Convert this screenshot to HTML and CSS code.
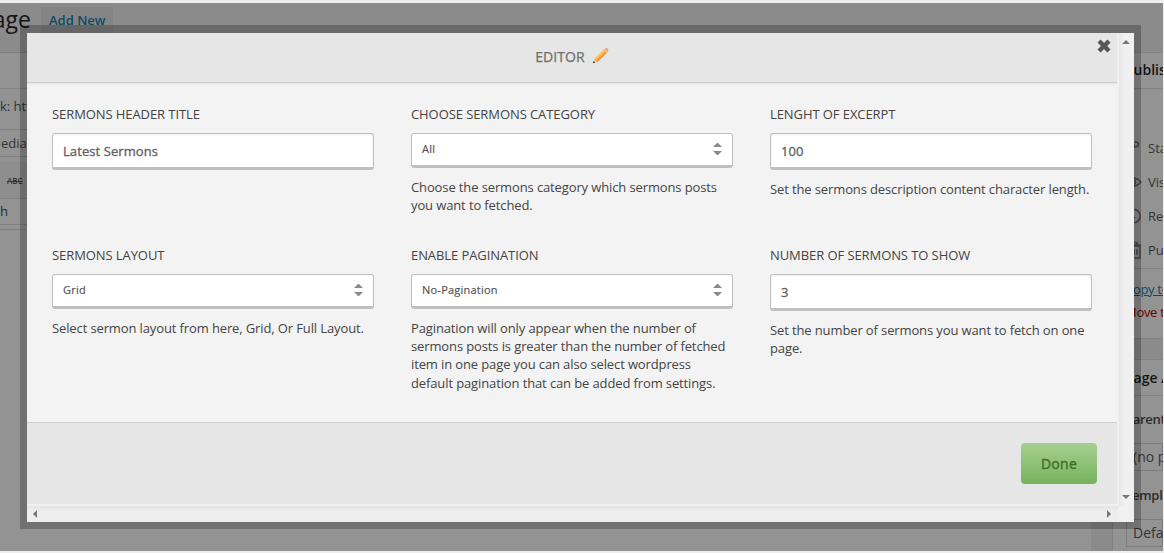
FILE: index.html
```
<!DOCTYPE html>
<html lang="en">
<head>
<meta charset="utf-8">
<title>Editor</title>
<link rel="stylesheet" href="styles.css">
</head>
<body>
<div class="page">
  <main class="editor-col">
    <div class="page-title"><h1><span>age</span></h1><a class="add-new">Add New</a></div>
    <div class="row title-row"></div>
    <div class="row link-row">k: http://</div>
    <div class="row media-row">edia</div>
    <div class="row gap-row"></div>
    <div class="row tools-row"><s>ABC</s></div>
    <div class="row para-row">h</div>
    <div class="row end-row"></div>
  </main>
  <aside class="side">
    <section class="box publish">
      <h2>Publish</h2>
      <ul>
        <li><svg width="18" height="18" viewBox="0 0 18 18"><path d="M7 14V4M8 3h4q4 1 2 4l-3 1z"/></svg>Status</li>
        <li><svg width="18" height="18" viewBox="0 0 18 18"><path d="M2 9q7.500-8 15 0q-7.500 8-15 0z"/><circle cx="9" cy="9" r="2.500"/></svg>Visibility</li>
        <li><svg width="18" height="18" viewBox="0 0 18 18"><circle cx="9.500" cy="9" r="6.800"/><path d="M8 5v4l3 2"/></svg>Revisions</li>
        <li><svg width="18" height="18" viewBox="0 0 18 18"><path d="M4 5h12v12H4zM3 4h14M7 1.500h6V4M10 8v6M13 8v6"/></svg>Published</li>
      </ul>
      <div class="actions"><a class="copy">Copy to a new draft</a><a class="trash">Move to Trash</a></div>
    </section>
    <section class="box attrs">
      <h2>Page Attributes</h2>
      <h3>Parent</h3>
      <div class="drop">(no parent)</div>
      <h3 class="tpl">Template</h3>
      <div class="drop">Default</div>
    </section>
  </aside>
</div>

<div class="modal">
  <div class="modal-main">
    <header class="modal-head">
      <span>EDITOR</span>
      <svg class="pencil" width="18" height="18" viewBox="0 0 18 18">
        <path d="M1 16.2L2.2 12L5.3 15z" fill="#f3cfb0"/>
        <path d="M1 16.2l.6-2.2l1.700 1.600z" fill="#222"/>
        <path d="M2.2 12L11.5 3L14.6 6L5.3 15z" fill="#fbb04a"/>
        <path d="M2.2 12L11.5 3L12.5 4L3.2 13z" fill="#ffc95f"/>
        <path d="M4.3 14L13.6 5L14.6 6L5.3 15z" fill="#ee8a45"/>
        <path d="M11.5 3L12.6 1.9L15.7 4.9L14.6 6z" fill="#f9c07c"/>
        <path d="M12.6 1.9Q14 .3 15.7 1.6Q17.2 3.2 15.7 4.9z" fill="#f3a06a"/>
      </svg>
      <svg class="close" width="14" height="14" viewBox="0 0 14 14"><path d="M3.6 3.6L10.4 10.4M10.4 3.6L3.6 10.4" stroke="#585858" stroke-width="4.4" stroke-linecap="square"/></svg>
    </header>
    <div class="fields">
      <div class="field"><label>SERMONS HEADER TITLE</label><div class="input">Latest Sermons</div></div>
      <div class="field"><label>CHOOSE SERMONS CATEGORY</label>
        <div class="select"><span>All</span><i class="arrows"></i></div>
        <p>Choose the sermons category which sermons posts<br>you want to fetched.</p></div>
      <div class="field"><label>LENGHT OF EXCERPT</label><div class="input">100</div>
        <p>Set the sermons description content character length.</p></div>
      <div class="field"><label>SERMONS LAYOUT</label>
        <div class="select"><span>Grid</span><i class="arrows"></i></div>
        <p>Select sermon layout from here, Grid, Or Full Layout.</p></div>
      <div class="field"><label>ENABLE PAGINATION</label>
        <div class="select"><span>No-Pagination</span><i class="arrows"></i></div>
        <p>Pagination will only appear when the number of<br>sermons posts is greater than the number of fetched<br>item in one page you can also select wordpress<br>default pagination that can be added from settings.</p></div>
      <div class="field"><label>NUMBER OF SERMONS TO SHOW</label><div class="input">3</div>
        <p>Set the number of sermons you want to fetch on one<br>page.</p></div>
    </div>
    <footer class="modal-foot"><a class="done">Done</a></footer>
  </div>
  <div class="vbar"><i class="tri up"></i><i class="tri down"></i></div>
  <div class="hbar"><i class="tri left"></i><i class="tri right"></i></div>
  <div class="corner"></div>
</div>
</body>
</html>
```
FILE: styles.css
```
* { box-sizing: border-box; }
body {
  margin: 0;
  height: 553px;
  overflow: hidden;
  padding: 3px 1px 2px 0;
  background: #eee;
  font: 13px/18px "Open Sans", sans-serif;
  color: #444;
}
h1, h2, h3, p, ul { margin: 0; padding: 0; font-weight: 400; }
ul { list-style: none; }

/* dimmed page behind the dialog */
.page {
  display: flex;
  gap: 21px;
  height: 548px;
  overflow: hidden;
  background: #8b8b8b;
  color: #333;
  white-space: nowrap;
}
.editor-col { width: 1091px; flex: none; background: linear-gradient(#8b8b8b 49px, #939393 49px); }
.page-title { display: flex; height: 49px; gap: 10px; }
.page-title h1 {
  width: 31px;
  display: flex;
  justify-content: flex-end;
  font-size: 23px;
  line-height: 33px;
  color: #151515;
}
.add-new {
  margin-top: 4px;
  height: 27px;
  padding: 0 8px;
  border-radius: 2px;
  background: #848484;
  color: #0c4a66;
  font-weight: 600;
  line-height: 26px;
}
.row { border-top: 1px solid #808080; }
.title-row { height: 36px; }
.link-row { height: 41px; line-height: 34px; border-color: #848484; }
.media-row { height: 27px; line-height: 26px; padding-left: 1px; }
.gap-row { height: 6px; }
.tools-row { height: 36px; padding-left: 7px; font-size: 8px; font-weight: 600; line-height: 36px; border-color: #8a8a8a; background: #8e8e8e; }
.para-row { height: 26px; line-height: 24px; color: #0f3545; }
.end-row { height: 6px; border-bottom: 1px solid #808080; }
.side { width: 51px; flex: none; padding-top: 49px; }
.box { border: solid #818181; border-width: 1px 0 1px 1px; background: #939393; overflow: hidden; }
.box h2 { height: 36px; padding-left: 12px; line-height: 34px; font-weight: 600; font-size: 14px; color: #151515; border-bottom: 1px solid #818181; }
.publish { height: 287px; margin-bottom: 20px; }
.publish ul { padding-top: 42px; }
.publish li { display: flex; gap: 6px; height: 34px; padding-left: 11px; line-height: 34px; align-items: center; }
.publish li svg { flex: none; fill: none; stroke: #4d4d4d; stroke-width: 1.5; }
.actions { display: flex; flex-direction: column; gap: 5px; margin-top: 1px; border-top: 1px solid #818181; padding: 11px 0 0 12px; letter-spacing: -.3px; }
.copy { color: #0c4a66; text-decoration: underline; }
.trash { color: #6d0000; }
.attrs { height: 192px; border-bottom: 0; }
.attrs h2 { line-height: 36px; }
.attrs h3 { height: 47px; padding: 14px 0 0 12px; font-size: 13px; font-weight: 600; color: #2b2b2b; letter-spacing: -.3px; }
.attrs .tpl { height: 48px; padding-top: 15px; }
.drop { height: 28px; margin-left: 13px; padding-left: 6px; line-height: 25px; border: 1px solid #7c7c7c; font-size: 14px; }

/* dialog */
.modal {
  position: absolute;
  left: 20px;
  top: 25px;
  width: 1121px;
  height: 504px;
  border: solid rgba(0, 0, 0, .23);
  border-width: 8px 7px 7px;
  background: #f0f0f0;
  background-clip: padding-box;
  display: grid;
  grid-template: 473px 16px / 1092px 15px;
}
.modal-main { display: flex; flex-direction: column; width: 1090px; height: 471px; background: #f3f3f3; }
.modal-head {
  position: relative;
  display: flex;
  justify-content: center;
  gap: 7px;
  height: 50px;
  padding-left: 1px;
  border-bottom: 1px solid #cecece;
  background: #e6e6e6;
  color: #707070;
  font-size: 14px;
  line-height: 48px;
}
.modal-head span { -webkit-text-stroke: .25px #707070; letter-spacing: .1px; }
.pencil { margin-top: 14px; }
.close { position: absolute; right: 6px; top: 6px; }
.fields {
  flex: 1;
  display: grid;
  grid-template: 141px 1fr / 322px 322px 322px;
  column-gap: 37px;
  padding: 22px 25px 0;
  box-shadow: inset 0 3px 3px -2px #e2e2e2;
}
.field { white-space: nowrap; }
.field label { display: block; height: 28px; line-height: 19px; color: #444; letter-spacing: -.08px; }
.input, .select {
  height: 37px;
  padding: 0 10px;
  border: 1px solid #bfbfbf;
  border-bottom-width: 3px;
  border-radius: 3px;
  background: #fff;
  color: #606060;
  line-height: 35px;
  letter-spacing: .08px;
  -webkit-text-stroke: .3px #606060;
  box-shadow: inset 0 1px 2px #eee;
}
.select { display: flex; justify-content: space-between; height: 35px; line-height: 30px; font-size: 11px; color: #505050; letter-spacing: .23px; -webkit-text-stroke: .15px #505050; box-shadow: none; }
.arrows { width: 9px; height: 12px; margin: 9px .5px 0 0; display: flex; flex-direction: column; justify-content: space-between; }
.arrows::before, .arrows::after { content: ""; border: solid transparent; border-width: 0 4px; }
.arrows::before { border-bottom: 4px solid #8a8a8a; }
.arrows::after { border-top: 4px solid #8a8a8a; }
.field p { padding-top: 10px; line-height: 18.2px; color: #444; letter-spacing: -.12px; }
.modal-foot { height: 82px; padding: 20px 20px 0 0; display: flex; justify-content: flex-end; background: #e6e6e6; border-top: 1px solid #cecece; }
.done {
  width: 76px;
  height: 41px;
  border-radius: 4px;
  background: linear-gradient(#a6d08f, #77b25d);
  color: #3c6e28;
  font-size: 14px;
  letter-spacing: .3px;
  -webkit-text-stroke: .35px #3c6e28;
  line-height: 41px;
  text-align: center;
}
.vbar, .hbar { display: flex; justify-content: space-between; align-items: center; background: linear-gradient(90deg, #e6e6e6, #f0f0f0 5px); }
.vbar { flex-direction: column; padding: 7px 1px 7px 0; }
.hbar { padding: 0 8px 0 6px; background: linear-gradient(#e4e4e4, #eee 5px); }
.corner { background: #f0f0f0; }
.tri { border: 4px solid transparent; }
.up { border-top: 0; border-bottom-color: #777; }
.down { border-bottom: 0; border-top-color: #777; }
.left { border-left: 0; border-right-color: #777; }
.right { border-right: 0; border-left-color: #777; }
```
